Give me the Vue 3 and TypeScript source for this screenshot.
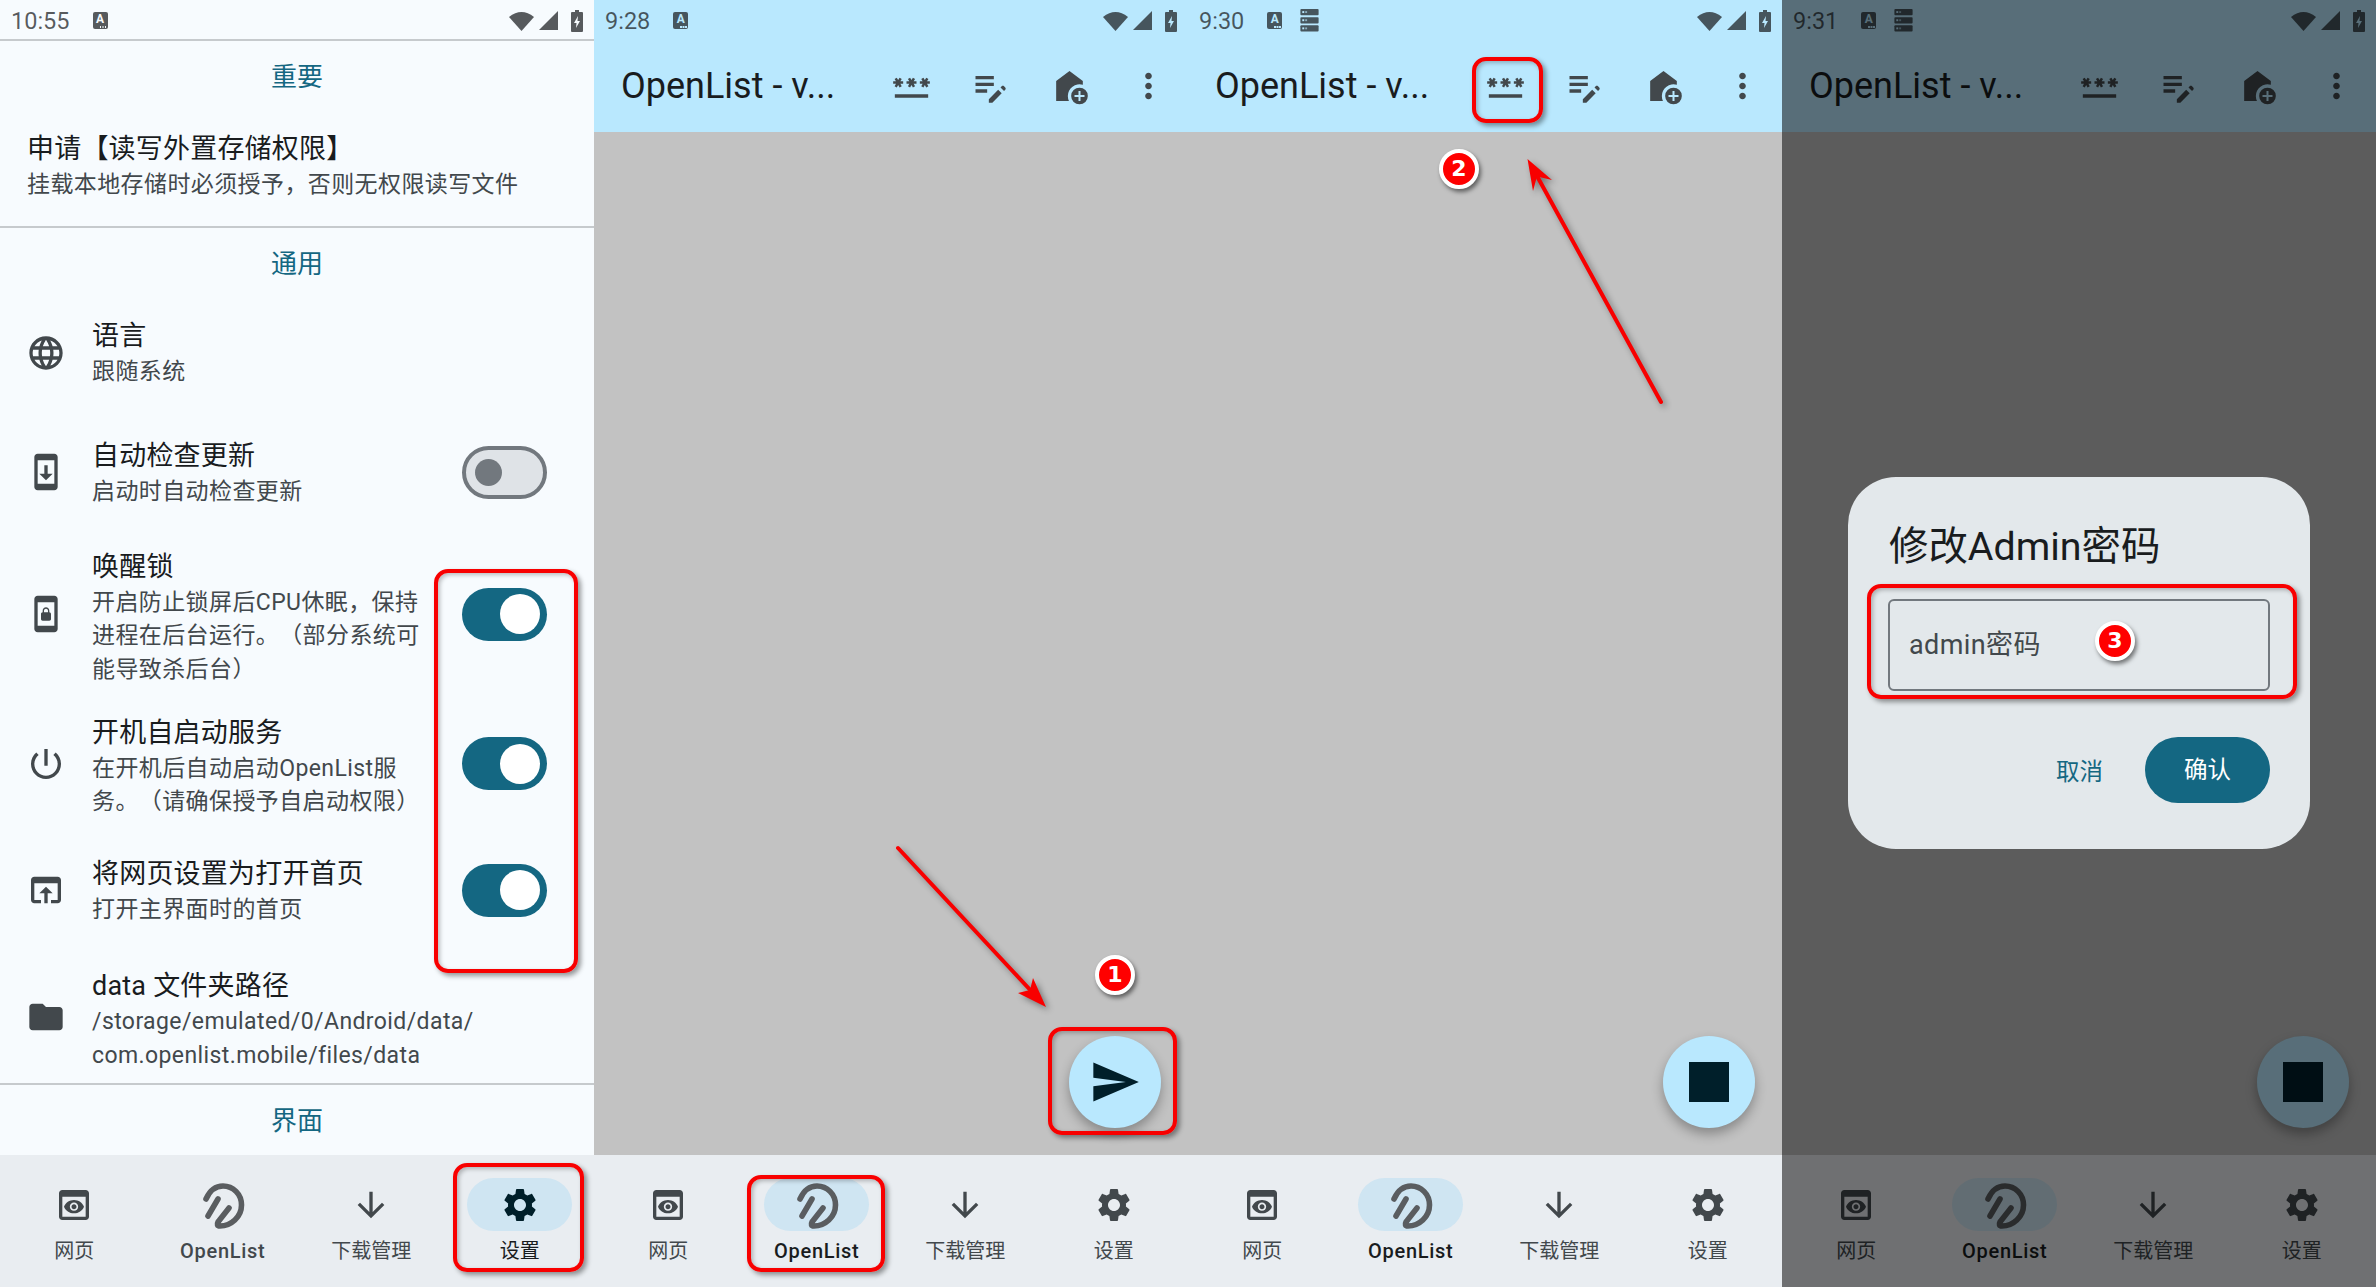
<template>
  <div class="page">
    <section v-for="screen in screens" :key="screen.time" class="phone" :class="{ web: !screen.settings }">
      <header class="status">
        <span class="time">{{ screen.time }}</span>
        <span class="ime"><span class="ime-a">A</span></span>
        <svg v-if="screen.storage" class="storage" viewBox="0 0 19 24">
          <g v-for="y in [0, 8.5, 17]" :key="y">
            <rect :y="y" width="19" height="6.5" rx="1" fill="currentColor" />
            <rect x="2" :y="y + 2.2" width="2" height="2" fill="#b9e8fe" />
            <rect x="5" :y="y + 2.2" width="2" height="2" fill="#b9e8fe" opacity=".6" />
          </g>
        </svg>
        <span class="status-right">
          <svg width="25" height="20" viewBox="0 0 25 20"><path d="M0 6Q12.5-4 25 6L12.5 20Z" fill="currentColor" /></svg>
          <svg width="19" height="19" viewBox="0 0 19 19"><path d="M19 0V19H0Z" fill="currentColor" /></svg>
          <svg class="battery" width="12" height="22" viewBox="0 0 12 22">
            <path fill-rule="evenodd" d="M4 0h4v2h3a1 1 0 0 1 1 1v18a1 1 0 0 1-1 1H1a1 1 0 0 1-1-1V3a1 1 0 0 1 1-1h3zM7 6 3 13h2.5L5 18l4-7H6.5z" fill="currentColor" />
          </svg>
        </span>
      </header>

      <!-- settings page, first screen only -->
      <main v-if="screen.settings" class="settings">
        <template v-for="group in groups" :key="group.title">
          <h3 class="group-title">{{ group.title }}</h3>
          <div
            v-for="row in group.rows"
            :key="row.title"
            class="row"
            :class="{ plain: !row.icon, tight: row.tight, tall: row.tall, last: row.last }"
          >
            <svg v-if="row.icon" class="row-icon" viewBox="0 0 24 24"><path :d="icons[row.icon]" /></svg>
            <div class="row-text">
              <div class="row-title">{{ row.title }}</div>
              <div class="row-sub">{{ row.sub }}</div>
            </div>
            <div v-if="row.toggle" class="switch" :class="row.toggle">
              <span class="thumb"></span>
            </div>
          </div>
          <div v-if="group.rows.length" class="divider"></div>
        </template>
      </main>

      <template v-else>
        <div class="appbar">
          <div class="appbar-title">OpenList - v...</div>
          <svg v-for="name in actions" :key="name" class="action" viewBox="0 0 24 24"><path :d="icons[name]" /></svg>
        </div>
        <main class="web-body">
          <button class="fab">
            <svg v-if="screen.fab === 'send'" width="52" height="52" viewBox="0 0 24 24"><path d="M2.01 21 23 12 2.01 3 2 10l15 2-15 2z" /></svg>
            <svg v-else width="80" height="80" viewBox="0 0 24 24"><path d="M6 6h12v12H6z" /></svg>
          </button>
        </main>
      </template>

      <nav class="nav">
        <div v-for="item in navItems" :key="item.label" class="nav-item" :class="{ active: item.key === screen.active }">
          <span class="pill">
            <svg v-if="item.key === 'list'" class="logo" width="80" height="60" viewBox="3 4 80 60">
              <path d="M26 28C30 19 36 15 43 15C53 15 61.5 23 61.5 34C61.5 46 51 55 40 55C37 55 37 53 38 51L49 37M38 28 28 45" />
            </svg>
            <svg v-else width="40" height="40" viewBox="0 0 24 24"><path :d="icons[item.key]" /></svg>
          </span>
          <span class="nav-label" :class="{ latin: item.key === 'list' }">{{ item.label }}</span>
        </div>
      </nav>

      <div v-if="screen.dialog" class="scrim">
        <div class="dialog">
          <div class="dialog-title">修改Admin密码</div>
          <div class="field">admin密码</div>
          <div class="dialog-actions">
            <span class="cancel">取消</span>
            <span class="confirm">确认</span>
          </div>
        </div>
      </div>
    </section>

    <!-- red marks drawn over the screenshots -->
    <svg class="arrows" width="2376" height="1287" viewBox="0 0 2376 1287">
      <g v-for="arrow in arrows" :key="arrow.line">
        <path :d="arrow.line" class="arrow-line" />
        <path :d="arrow.head" class="arrow-head" />
      </g>
    </svg>
    <div v-for="box in boxes" :key="box.x" class="mark-box" :style="boxStyle(box)"></div>
    <div v-for="b in badges" :key="b.n" class="badge" :style="{ left: b.x - 20 + 'px', top: b.y - 20 + 'px' }">{{ b.n }}</div>
  </div>
</template>

<script setup lang="ts">
type Row = {
  icon?: string
  title: string
  sub: string
  toggle?: 'on' | 'off'
  tight?: boolean
  tall?: boolean
  last?: boolean
}

const icons: Record<string, string> = {
  language:
    'M11.99 2C6.47 2 2 6.48 2 12s4.47 10 9.99 10C17.52 22 22 17.52 22 12S17.52 2 11.99 2zm6.93 6h-2.95c-.32-1.25-.78-2.45-1.38-3.56 1.84.63 3.37 1.91 4.33 3.56zM12 4.04c.83 1.2 1.48 2.53 1.91 3.96h-3.82c.43-1.43 1.08-2.76 1.91-3.96zM4.26 14C4.1 13.36 4 12.69 4 12s.1-1.36.26-2h3.38c-.08.66-.14 1.32-.14 2 0 .68.06 1.34.14 2H4.26zm.82 2h2.95c.32 1.25.78 2.45 1.38 3.56-1.84-.63-3.37-1.9-4.33-3.56zm2.95-8H5.08c.96-1.66 2.49-2.93 4.33-3.56C8.81 5.55 8.35 6.75 8.03 8zM12 19.96c-.83-1.2-1.48-2.53-1.91-3.96h3.82c-.43 1.43-1.08 2.76-1.91 3.96zM14.34 14H9.66c-.09-.66-.16-1.32-.16-2 0-.68.07-1.35.16-2h4.68c.09.65.16 1.32.16 2 0 .68-.07 1.34-.16 2zm.25 5.56c.6-1.11 1.06-2.31 1.38-3.56h2.95c-.96 1.65-2.49 2.93-4.33 3.56zM16.36 14c.08-.66.14-1.32.14-2 0-.68-.06-1.34-.14-2h3.38c.16.64.26 1.31.26 2s-.1 1.36-.26 2h-3.38z',
  update:
    'M17 1.01 7 1c-1.1 0-2 .9-2 2v18c0 1.1.9 2 2 2h10c1.1 0 2-.9 2-2V3c0-1.1-.9-1.99-2-1.99zM17 19H7V5h10v14zm-1-6h-3V8h-2v5H8l4 4 4-4z',
  lock: 'M10 16h4c.55 0 1-.45 1-1v-3c0-.55-.45-1-1-1v-1c0-1.11-.9-2-2-2-1.11 0-2 .9-2 2v1c-.55 0-1 .45-1 1v3c0 .55.45 1 1 1zm.8-6c0-.66.54-1.2 1.2-1.2.66 0 1.2.54 1.2 1.2v1h-2.4v-1zM17 1H7c-1.1 0-2 .9-2 2v18c0 1.1.9 2 2 2h10c1.1 0 2-.9 2-2V3c0-1.1-.9-2-2-2zm0 18H7V5h10v14z',
  power:
    'M13 3h-2v10h2V3zm4.83 2.17l-1.42 1.42C17.99 7.86 19 9.81 19 12c0 3.87-3.13 7-7 7s-7-3.13-7-7c0-2.19 1.01-4.14 2.58-5.42L6.17 5.17C4.23 6.82 3 9.26 3 12c0 4.97 4.03 9 9 9s9-4.03 9-9c0-2.74-1.23-5.18-3.17-6.83z',
  open: 'M19 4H5c-1.11 0-2 .9-2 2v12c0 1.1.89 2 2 2h4v-2H5V8h14v10h-4v2h4c1.1 0 2-.9 2-2V6c0-1.1-.89-2-2-2zm-7 6l-4 4h3v6h2v-6h3l-4-4z',
  folder: 'M10 4H4c-1.1 0-1.99.9-1.99 2L2 18c0 1.1.9 2 2 2h16c1.1 0 2-.9 2-2V8c0-1.1-.9-2-2-2h-8l-2-2z',
  web: 'M19 3H5c-1.11 0-2 .9-2 2v14c0 1.1.89 2 2 2h14c1.1 0 2-.9 2-2V5c0-1.1-.89-2-2-2zm0 16H5V7h14v12zm-5.5-6c0 .83-.67 1.5-1.5 1.5s-1.5-.67-1.5-1.5.67-1.5 1.5-1.5 1.5.67 1.5 1.5zM12 9c-2.73 0-5.06 1.66-6 4 .94 2.34 3.27 4 6 4s5.06-1.66 6-4c-.94-2.34-3.27-4-6-4zm0 6.5c-1.38 0-2.5-1.12-2.5-2.5s1.12-2.5 2.5-2.5 2.5 1.12 2.5 2.5-1.12 2.5-2.5 2.5z',
  download: 'M20 12l-1.41-1.41L13 16.17V4h-2v12.17l-5.58-5.59L4 12l8 8 8-8z',
  settings:
    'M19.14 12.94c.04-.3.06-.61.06-.94 0-.32-.02-.64-.07-.94l2.03-1.58c.18-.14.23-.41.12-.61l-1.92-3.32c-.12-.22-.37-.29-.59-.22l-2.39.96c-.5-.38-1.03-.7-1.62-.94l-.36-2.54c-.04-.24-.24-.41-.48-.41h-3.84c-.24 0-.43.17-.47.41l-.36 2.54c-.59.24-1.13.57-1.62.94l-2.39-.96c-.22-.08-.47 0-.59.22L2.74 8.87c-.12.21-.08.47.12.61l2.03 1.58c-.05.3-.09.63-.09.94s.02.64.07.94l-2.03 1.58c-.18.14-.23.41-.12.61l1.92 3.32c.12.22.37.29.59.22l2.39-.96c.5.38 1.03.7 1.62.94l.36 2.54c.05.24.24.41.48.41h3.84c.24 0 .44-.17.47-.41l.36-2.54c.59-.24 1.13-.56 1.62-.94l2.39.96c.22.08.47 0 .59-.22l1.92-3.32c.12-.22.07-.47-.12-.61l-2.01-1.58zM12 15.6c-1.98 0-3.6-1.62-3.6-3.6s1.62-3.6 3.6-3.6 3.6 1.62 3.6 3.6-1.62 3.6-3.6 3.6z',
  password:
    'M2 17h20v2H2v-2zm1.15-4.05L4 11.47l.85 1.48 1.3-.75-.85-1.48H7v-1.5H5.3l.85-1.47L4.85 7 4 8.47 3.15 7l-1.3.75.85 1.47H1v1.5h1.7l-.85 1.48 1.3.75zm6.7-.75 1.3.75.85-1.48.85 1.48 1.3-.75-.85-1.48H15v-1.5h-1.7l.85-1.47-1.3-.75L12 8.47 11.15 7l-1.3.75.85 1.47H9v1.5h1.7l-.85 1.48zM23 9.22h-1.7l.85-1.47-1.3-.75L20 8.47 19.15 7l-1.3.75.85 1.47H17v1.5h1.7l-.85 1.48 1.3.75.85-1.48.85 1.48 1.3-.75-.85-1.48H23v-1.5z',
  editNote:
    'M3 10h11v2H3zm0-4h11v2H3zm0 8h7v2H3zm15.01-1.13.71-.71c.39-.39 1.02-.39 1.41 0l.71.71c.39.39.39 1.02 0 1.41l-.71.71-2.12-2.12zm-1.41 1.41L11 19.88V22h2.12l5.6-5.6-2.12-2.12z',
  addHome:
    'M12 3 4 9v12h7.68A6.97 6.97 0 0 1 11 18a7 7 0 0 1 9-6.71V9zM18 13a5 5 0 1 0 0 10 5 5 0 0 0 0-10zm3 5.6h-2.4V21h-1.2v-2.4H15v-1.2h2.4V15h1.2v2.4H21z',
  more: 'M12 8c1.1 0 2-.9 2-2s-.9-2-2-2-2 .9-2 2 .9 2 2 2zm0 2c-1.1 0-2 .9-2 2s.9 2 2 2 2-.9 2-2-.9-2-2-2zm0 6c-1.1 0-2 .9-2 2s.9 2 2 2 2-.9 2-2-.9-2-2-2z',
}

const screens = [
  { time: '10:55', settings: true, active: 'settings', storage: false, fab: '', dialog: false },
  { time: '9:28', settings: false, active: 'list', storage: false, fab: 'send', dialog: false },
  { time: '9:30', settings: false, active: 'list', storage: true, fab: 'stop', dialog: false },
  { time: '9:31', settings: false, active: 'list', storage: true, fab: 'stop', dialog: true },
]

const navItems = [
  { key: 'web', label: '网页' },
  { key: 'list', label: 'OpenList' },
  { key: 'download', label: '下载管理' },
  { key: 'settings', label: '设置' },
]

const actions = ['password', 'editNote', 'addHome', 'more']

const groups: { title: string; rows: Row[] }[] = [
  {
    title: '重要',
    rows: [{ title: '申请【读写外置存储权限】', sub: '挂载本地存储时必须授予，否则无权限读写文件' }],
  },
  {
    title: '通用',
    rows: [
      { icon: 'language', title: '语言', sub: '跟随系统' },
      { icon: 'update', title: '自动检查更新', sub: '启动时自动检查更新', toggle: 'off' },
      {
        icon: 'lock',
        title: '唤醒锁',
        sub: '开启防止锁屏后CPU休眠，保持\n进程在后台运行。（部分系统可\n能导致杀后台）',
        toggle: 'on',
        tall: true,
        tight: true,
      },
      {
        icon: 'power',
        title: '开机自启动服务',
        sub: '在开机后自动启动OpenList服\n务。（请确保授予自启动权限）',
        toggle: 'on',
        tall: true,
      },
      { icon: 'open', title: '将网页设置为打开首页', sub: '打开主界面时的首页', toggle: 'on' },
      {
        icon: 'folder',
        title: 'data 文件夹路径',
        sub: '/storage/emulated/0/Android/data/\ncom.openlist.mobile/files/data',
        tall: true,
        last: true,
      },
    ],
  },
  { title: '界面', rows: [] },
]

const boxes = [
  { x: 434, y: 569, w: 144, h: 404 },
  { x: 453, y: 1163, w: 131, h: 109 },
  { x: 1048, y: 1027, w: 129, h: 108 },
  { x: 747, y: 1175, w: 138, h: 97 },
  { x: 1472, y: 57, w: 71, h: 66 },
  { x: 1867, y: 584, w: 430, h: 115 },
]

const badges = [
  { n: 1, x: 1115, y: 975 },
  { n: 2, x: 1459, y: 169 },
  { n: 3, x: 2115, y: 641 },
]

const arrows = [
  { line: 'M898 848L1034 994', head: 'M1046 1007L1033 978L1030 990L1018 993Z' },
  { line: 'M1661 402L1537 176', head: 'M1527.5 159L1552 180L1537 176.5L1533 191Z' },
]

const boxStyle = (b: { x: number; y: number; w: number; h: number }) => ({
  left: b.x + 'px',
  top: b.y + 'px',
  width: b.w + 'px',
  height: b.h + 'px',
})
</script>

<style scoped>
.page {
  position: relative;
  display: grid;
  grid-template-columns: repeat(4, 594px);
  width: 2376px;
  height: 1287px;
  overflow: hidden;
  font-family: Roboto, 'Noto Sans CJK SC', sans-serif;
  color: #191c1e;
  text-spacing-trim: space-all;
}

.phone {
  position: relative;
  display: flex;
  flex-direction: column;
  height: 1287px;
  background: #f7fbfe;
}

.status {
  display: flex;
  align-items: center;
  flex: none;
  height: 40px;
  padding: 1px 11px 0;
  box-sizing: border-box;
  color: rgba(25, 28, 30, 0.72);
}

.web .status {
  background: #b9e8fe;
}

.time {
  font-size: 23.5px;
  line-height: 40px;
}

.ime {
  position: relative;
  display: flex;
  justify-content: center;
  width: 15px;
  height: 17px;
  margin-left: 23px;
  border-radius: 2px;
  background: currentColor;
  --chip: #f7fbfe;
}

.web .ime {
  --chip: #b9e8fe;
}

.ime::after {
  content: '';
  position: absolute;
  right: 1.5px;
  bottom: 1.5px;
  width: 1.5px;
  height: 1.5px;
  background: var(--chip);
  box-shadow: -2.5px 0 var(--chip), -5px 0 var(--chip);
}

.ime-a {
  font-size: 12px;
  font-weight: 700;
  line-height: 14px;
  color: var(--chip);
}

.storage {
  width: 19px;
  height: 23px;
  margin-left: 18px;
}

.status-right {
  display: flex;
  align-items: center;
  gap: 5px;
  margin-left: auto;
}

.battery {
  margin-left: 8px;
}

.settings {
  flex: 1;
  margin-top: -1px;
  border-top: 2px solid #c6cacd;
  overflow: hidden;
}

.group-title {
  margin: 0;
  padding: 16px 0 9px;
  font-size: 26px;
  font-weight: 400;
  line-height: 40px;
  text-align: center;
  color: #146782;
}

.row {
  display: flex;
  align-items: center;
  gap: 26px;
  box-sizing: border-box;
  min-height: 119.5px;
  padding: 12px 47px 12px 26px;
}

.row.plain {
  min-height: 120px;
  padding-left: 27px;
}

.row.tight {
  padding-top: 10.5px;
  padding-bottom: 10.5px;
}

.row.last {
  padding-bottom: 11px;
}

.row.tall .row-text {
  padding-top: 5px;
}

.row-icon {
  flex: none;
  width: 40px;
  height: 40px;
  fill: #42484c;
}

.row-text {
  flex: 1;
  min-width: 0;
}

.row-title {
  padding-top: 1px;
  font-size: 27px;
  line-height: 37px;
  letter-spacing: 0.2px;
  color: #191c1e;
}

.row-sub {
  font-size: 23px;
  line-height: 33.5px;
  letter-spacing: 0.4px;
  white-space: pre-line;
  color: #42484c;
}

.switch {
  display: flex;
  align-items: center;
  flex: none;
  box-sizing: border-box;
  width: 85px;
  height: 53px;
  border-radius: 27px;
}

.switch.on {
  justify-content: flex-end;
  padding-right: 7px;
  background: #146782;
}

.switch.on .thumb {
  width: 40px;
  height: 40px;
  background: #fff;
}

.switch.off {
  padding-left: 9px;
  border: 4px solid #72787e;
  background: #dfe3e7;
}

.switch.off .thumb {
  width: 27px;
  height: 27px;
  background: #72787e;
}

.thumb {
  border-radius: 50%;
}

.divider {
  height: 2px;
  background: #c6cacd;
}

.appbar {
  display: flex;
  align-items: center;
  flex: none;
  height: 92px;
  padding-left: 27px;
  background: #b9e8fe;
}

.appbar-title {
  flex: 1;
  font-size: 36px;
  line-height: 50px;
  white-space: nowrap;
  color: #191c1e;
}

.action {
  flex: none;
  width: 40px;
  height: 40px;
  padding: 0 19.5px;
  fill: #42484c;
}

.web-body {
  position: relative;
  flex: 1;
  background: #c2c2c2;
}

.fab {
  position: absolute;
  right: 27px;
  bottom: 27px;
  display: flex;
  align-items: center;
  justify-content: center;
  width: 92px;
  height: 92px;
  padding: 0;
  border: none;
  border-radius: 50%;
  background: #b9e8fe;
  box-shadow: 0 6px 12px rgba(0, 0, 0, 0.3);
}

.fab svg {
  fill: #001f2a;
}

.nav {
  display: flex;
  flex: none;
  height: 132px;
  background: #e9edf1;
}

.nav-item {
  display: flex;
  flex: 1;
  flex-direction: column;
  align-items: center;
  padding-top: 23px;
}

.pill {
  display: flex;
  align-items: center;
  justify-content: center;
  width: 105px;
  height: 53px;
  border-radius: 27px;
}

.pill svg {
  fill: #42484c;
}

.logo {
  fill: none !important;
  stroke: #5a5d60;
  stroke-width: 5.6;
  stroke-linecap: round;
  stroke-linejoin: round;
}

.nav-item.active .pill {
  background: #cfe5f2;
}

.nav-item.active .pill svg {
  fill: #001f2a;
}

.nav-label {
  margin-top: 6px;
  font-size: 20px;
  line-height: 28px;
  color: #42484c;
}

.nav-label.latin {
  font-weight: 500;
  letter-spacing: 0.7px;
  color: #42484c;
}

.nav-item.active .nav-label {
  color: #191c1e;
}

.scrim {
  position: absolute;
  inset: 0;
  display: flex;
  align-items: center;
  justify-content: center;
  padding-top: 38px;
  box-sizing: border-box;
  background: rgba(0, 0, 0, 0.526);
}

.dialog {
  box-sizing: border-box;
  width: 462px;
  height: 372px;
  padding: 45px 40px 0 41px;
  border-radius: 48px;
  background: #e3e8eb;
}

.dialog-title {
  font-size: 39.4px;
  line-height: 50px;
  color: #191c1e;
}

.field {
  box-sizing: border-box;
  width: 382px;
  height: 92px;
  margin: 27px 0 0 -1px;
  padding-left: 19px;
  border: 2px solid #72787e;
  border-radius: 6px;
  font-size: 27px;
  line-height: 88px;
  letter-spacing: 0.4px;
  color: #42484c;
}

.dialog-actions {
  display: flex;
  align-items: center;
  justify-content: flex-end;
  gap: 42px;
  margin-top: 46px;
}

.cancel {
  font-size: 23.5px;
  color: #146782;
}

.confirm {
  width: 125px;
  height: 66px;
  border-radius: 33px;
  font-size: 23.5px;
  line-height: 66px;
  text-align: center;
  color: #fff;
  background: #146782;
}

.arrows {
  position: absolute;
  left: 0;
  top: 0;
  pointer-events: none;
  filter: drop-shadow(3px 3px 3px rgba(0, 0, 0, 0.4));
}

.arrow-line {
  fill: none;
  stroke: #f80000;
  stroke-width: 4;
  stroke-linecap: round;
}

.arrow-head {
  fill: #f80000;
}

.mark-box {
  position: absolute;
  box-sizing: border-box;
  border: 4px solid #f80000;
  border-radius: 14px;
  box-shadow: 3px 3px 5px rgba(0, 0, 0, 0.4), inset 2px 2px 4px rgba(0, 0, 0, 0.25);
}

.badge {
  position: absolute;
  box-sizing: border-box;
  width: 40px;
  height: 40px;
  border: 4px solid #fff;
  border-radius: 50%;
  font-family: 'DejaVu Sans', sans-serif;
  font-size: 22px;
  font-weight: 700;
  line-height: 32px;
  text-align: center;
  color: #fff;
  background: #f00;
  box-shadow: 2px 3px 4px rgba(0, 0, 0, 0.5);
}
</style>
